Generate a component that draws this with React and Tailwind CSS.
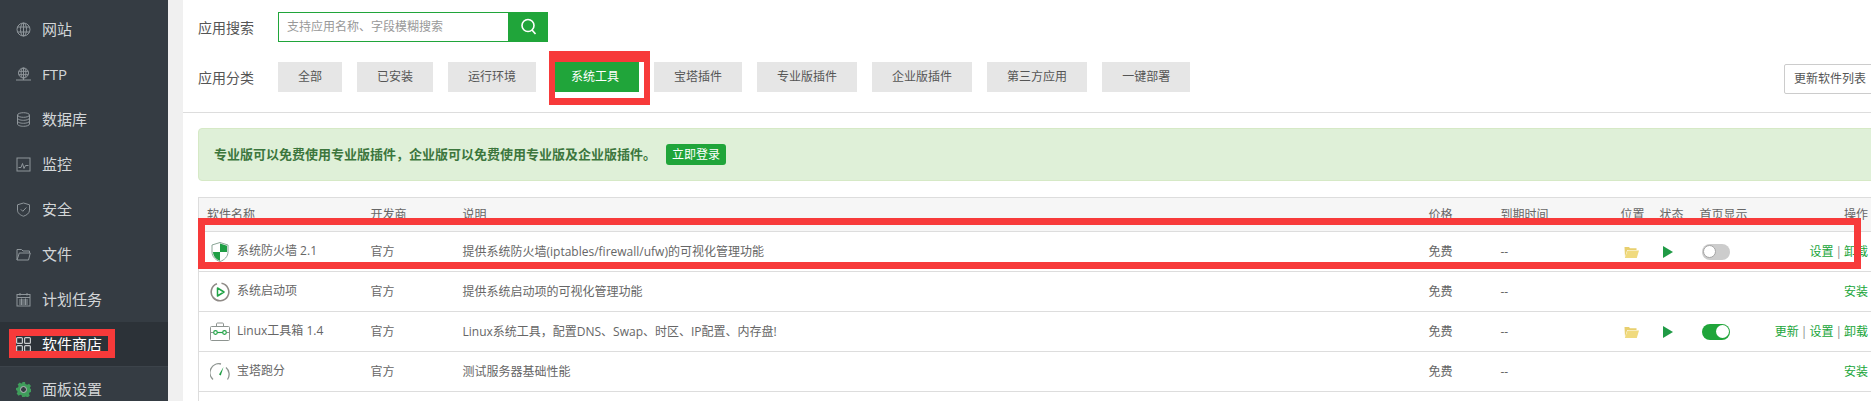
import React from "react";

const FONT = '"Open Sans","Noto Sans CJK SC","Noto Sans",sans-serif';

const S = ({ children, size = 15 }) => (
  <svg width={size} height={size} viewBox="0 0 15 15" fill="none" stroke="#8f969b" strokeWidth="1" className="shrink-0">
    {children}
  </svg>
);

const IGlobe = () => (
  <S>
    <circle cx="7.5" cy="7.5" r="6.5" />
    <ellipse cx="7.5" cy="7.5" rx="3" ry="6.5" />
    <path d="M1.5 5h12M1.5 10h12M7.5 1v13" />
  </S>
);
const IFtp = () => (
  <S>
    <circle cx="7.5" cy="6" r="5" />
    <ellipse cx="7.5" cy="6" rx="2.4" ry="5" />
    <path d="M2.8 4.3h9.4M2.8 7.7h9.4M7.5 1v10M0 13h15M7.5 11v2" />
  </S>
);
const IDb = () => (
  <S>
    <ellipse cx="7.5" cy="3" rx="6" ry="2.3" />
    <path d="M1.5 3v9c0 1.3 2.7 2.3 6 2.3s6-1 6-2.3V3M1.5 6c0 1.3 2.7 2.3 6 2.3s6-1 6-2.3M1.5 9c0 1.3 2.7 2.3 6 2.3s6-1 6-2.3" />
  </S>
);
const IMon = () => (
  <S>
    <rect x="1" y="1" width="13" height="13" />
    <path d="M2.5 10.5h2.5l1.5-4 1.5 5 1.5-3h3" />
  </S>
);
const IShield = () => (
  <S>
    <path d="M7.5 1l6 1.8v5.4c0 3-2.8 5-6 6-3.2-1-6-3-6-6V2.800z" />
    <path d="M4.800 7.300l2 2 3.500-3.800" />
  </S>
);
const IFolder = () => (
  <S>
    <path d="M1 13V2.500h4.500l1.500 1.500h6.500v2M1 13l2.300-7h11L12.500 13z" />
  </S>
);
const ICal = () => (
  <S>
    <rect x="1" y="2.500" width="13" height="11.500" />
    <path d="M1 5.500h13M4 1v2.500M11 1v2.500M3 8h9M3 10h9M3 12h9M5.500 6.500v6.500M9.500 6.500v6.500" />
  </S>
);
const IGrid = () => (
  <svg width="15" height="15" viewBox="0 0 15 15" fill="none" stroke="#c9cccf" strokeWidth="1.200" className="shrink-0">
    <rect x="0.600" y="0.600" width="5.800" height="5.800" rx="1" />
    <rect x="8.600" y="0.600" width="5.800" height="5.800" rx="1" />
    <rect x="0.600" y="8.600" width="5.800" height="5.800" rx="1" />
    <rect x="8.600" y="8.600" width="5.800" height="5.800" rx="1" />
  </svg>
);
const IGear = () => (
  <svg width="15" height="15" viewBox="0 0 15 15" className="shrink-0">
    <path
      fill="#3f9d5b"
      d="M6 0h3l.4 2 1.900.8L13 1.700l2 2.300-1.100 1.600.6 1.400H15v3l-1.500.4-.6 1.400.9 1.700-2.200 2-1.700-1-1.400.5L8.900 15H6.100l-.4-1.700-1.500-.6-1.600 1L.600 11.600l1-1.600-.6-1.500L0 8.200V6l1.900-.4.700-1.500-1-1.600 2.100-2 1.600 1 1.400-.6z"
    />
    <circle cx="7.500" cy="7.500" r="3" fill="#353c43" stroke="#b9bdc0" strokeWidth="1" />
  </svg>
);

const nav = [
  ["网站", IGlobe],
  ["FTP", IFtp],
  ["数据库", IDb],
  ["监控", IMon],
  ["安全", IShield],
  ["文件", IFolder],
  ["计划任务", ICal],
  ["软件商店", IGrid, true],
  ["面板设置", IGear],
];

const cats = [
  ["全部"],
  ["已安装"],
  ["运行环境"],
  ["系统工具", true],
  ["宝塔插件"],
  ["专业版插件"],
  ["企业版插件"],
  ["第三方应用"],
  ["一键部署"],
];

const AShield = () => (
  <svg width="20" height="20" viewBox="0 0 20 20">
    <path d="M10 0.500l8 2.500v7c0 4.500-3.500 8-8 9.500-4.500-1.500-8-5-8-9.500V3z" fill="#fff" stroke="#8aa596" strokeWidth="1" />
    <path d="M10 1.500l7 2.200V10h-7zM10 10v8.800c-3.800-1.300-7-4.500-7-8.800z" fill="#1f9e45" />
  </svg>
);
const APlay = () => (
  <svg width="20" height="20" viewBox="0 0 20 20" fill="none">
    <path d="M11.500 1.300A8.800 8.800 0 1 1 7 1.700" stroke="#8f8a86" strokeWidth="1.600" />
    <path d="M7.500 6l6.500 4-6.500 4z" stroke="#22a447" strokeWidth="1.500" strokeLinejoin="round" />
  </svg>
);
const ABox = () => (
  <svg width="20" height="20" viewBox="0 0 20 20" fill="none">
    <rect x="0.500" y="4.500" width="19" height="14" rx="1" stroke="#8d9490" />
    <path d="M6.500 4.500V2c0-.5.300-1 1-1h5c.7 0 1 .5 1 1v2.500M0.500 10.500h3M8 10.500h4M16.500 10.500h3" stroke="#8d9490" />
    <circle cx="5.500" cy="10.500" r="1.800" stroke="#22a447" strokeWidth="1.200" />
    <circle cx="14.500" cy="10.500" r="1.800" stroke="#22a447" strokeWidth="1.200" />
    <path d="M7.300 10.500h5.400" stroke="#22a447" strokeWidth="1.200" />
  </svg>
);
const AGauge = () => (
  <svg width="20" height="20" viewBox="0 0 20 20" fill="none">
    <path d="M3 17.500A9 9 0 0 1 11 2M16 5.500A9 9 0 0 1 17.500 17.500" stroke="#8d9490" strokeWidth="1.300" />
    <path d="M13.500 5l-4.500 7.500 1.800 1z" fill="#1f9e45" />
  </svg>
);
const ABlue = () => (
  <svg width="20" height="20" viewBox="0 0 20 20">
    <rect x="6" y="1" width="9" height="16" rx="2" fill="#2d8fd5" />
  </svg>
);

const FolderY = () => (
  <svg width="15" height="12" viewBox="0 0 15 12" className="mx-auto block">
    <path d="M0.500 1h4.500l1 1.300h6.500v1.700H3.200L1 11z" fill="#e8cf6e" />
    <path d="M3.500 4.500H15L12.800 12H0.800z" fill="#f0da7e" />
  </svg>
);
const PlayG = () => (
  <svg width="10" height="12" viewBox="0 0 10 12" className="block">
    <path d="M0 0l10 6-10 6z" fill="#1f9a45" />
  </svg>
);
const Toggle = ({ on }) =>
  on ? (
    <div className="flex h-[16px] w-[28px] items-center justify-end rounded-full bg-[#20a53a] pr-[1px]">
      <div className="h-[13px] w-[13px] rounded-full bg-white" />
    </div>
  ) : (
    <div className="flex h-[16px] w-[28px] items-center rounded-full bg-[#cccccc] pl-[1px]">
      <div className="h-[13px] w-[13px] rounded-full border border-[#a5a5a5] bg-white" />
    </div>
  );

const Sep = () => <span className="mx-[2px] text-[#888]">|</span>;
const L = ({ children }) => <span className="text-[#20a53a]">{children}</span>;

const rows = [
  {
    Icon: AShield,
    name: "系统防火墙 2.1",
    desc: "提供系统防火墙(iptables/firewall/ufw)的可视化管理功能",
    installed: true,
    on: false,
    ops: ["设置", "卸载"],
  },
  { Icon: APlay, name: "系统启动项", desc: "提供系统启动项的可视化管理功能", ops: ["安装"] },
  {
    Icon: ABox,
    name: "Linux工具箱 1.4",
    desc: "Linux系统工具，配置DNS、Swap、时区、IP配置、内存盘!",
    installed: true,
    on: true,
    ops: ["更新", "设置", "卸载"],
  },
  { Icon: AGauge, name: "宝塔跑分", desc: "测试服务器基础性能", ops: ["安装"] },
];

const heads = [
  ["软件名称", "w-[163px] pl-[8px] text-left"],
  ["开发商", "w-[92px] pl-[9px] text-left"],
  ["说明", "w-[966px] pl-[9px] text-left"],
  ["价格", "w-[72px] pl-[9px] text-left"],
  ["到期时间", "w-[120px] pl-[9px] text-left"],
  ["位置", "w-[39px] pl-[9px] text-left"],
  ["状态", "w-[40px] pl-[9px] text-left"],
  ["首页显示", "w-[70px] pl-[9px] text-left"],
  ["操作", "pr-[3px] text-right"],
];

export default function App() {
  return (
    <div
      className="relative flex h-[401px] w-[1871px] overflow-hidden bg-[#f0f0f0] text-[12px] text-[#666]"
      style={{ fontFamily: FONT }}
    >
      <aside className="w-[168px] shrink-0 bg-[#353c43] pt-[7px]">
        {nav.map(([label, Icon, active]) => (
          <div
            key={label}
            className={
              active
                ? "flex h-[45px] items-center gap-[11px] border-b border-[#3c434a] bg-[#2c3238] pl-[16px] text-[15px] text-white"
                : "flex h-[45px] items-center gap-[11px] pl-[16px] text-[15px] text-[#d3d6d8]"
            }
          >
            <Icon />
            <span>{label}</span>
          </div>
        ))}
      </aside>

      <main className="ml-[15px] min-w-0 flex-1 overflow-hidden bg-white">
        <section className="h-[113px] border-b border-[#dddddd] pl-[15px] pt-[12px]">
          <div className="flex h-[30px] items-center">
            <span className="w-[80px] text-[14px] text-[#555]">应用搜索</span>
            <div className="flex h-[30px] w-[231px] items-center border border-[#20a53a] pl-[8px] text-[#999]">
              支持应用名称、字段模糊搜索
            </div>
            <div className="flex h-[30px] w-[39px] items-center justify-center bg-[#20a53a]">
              <svg width="18" height="18" viewBox="0 0 18 18" fill="none" stroke="#fff" strokeWidth="1.600">
                <circle cx="8" cy="7.500" r="6" />
                <path d="M12 12l3.500 4" />
              </svg>
            </div>
          </div>
          <div className="mt-[20px] flex h-[30px] items-center">
            <span className="w-[80px] text-[14px] text-[#555]">应用分类</span>
            <div className="flex gap-[15px]">
              {cats.map(([c, active]) => (
                <div
                  key={c}
                  className={
                    active
                      ? "flex h-[30px] items-center bg-[#20a53a] px-[20px] text-white"
                      : "flex h-[30px] items-center bg-[#e6e6e6] px-[20px] text-[#555]"
                  }
                >
                  {c}
                </div>
              ))}
            </div>
            <div className="ml-auto mr-[-20px] mt-[4px] flex h-[30px] items-center rounded-[2px] border border-[#cccccc] bg-white pl-[9px] pr-[24px] text-[#555]">
              更新软件列表
            </div>
          </div>
        </section>

        <div className="ml-[15px] mr-[-10px] mt-[15px] flex h-[53px] items-center rounded-[4px] border border-[#d6e9c6] bg-[#dff0d8] pl-[15px]">
          <span className="text-[13px] font-bold text-[#3c763d]">
            专业版可以免费使用专业版插件，企业版可以免费使用专业版及企业版插件。
          </span>
          <span className="ml-[10px] flex h-[21px] w-[60px] items-center justify-center rounded-[3px] bg-[#20a53a] text-white">
            立即登录
          </span>
        </div>

        <table className="ml-[15px] mt-[16px] w-[1673px] table-fixed border-collapse border-l border-t border-[#dddddd]">
          <thead>
            <tr className="h-[34px] bg-[#f6f6f6]">
              {heads.map(([h, cls]) => (
                <th key={h} className={`${cls} border-b border-[#dddddd] font-normal`}>
                  {h}
                </th>
              ))}
            </tr>
          </thead>
          <tbody>
            {rows.map((r) => (
              <tr key={r.name} className="h-[40px] border-b border-[#dddddd]">
                <td className="pl-[11px]">
                  <div className="flex items-center gap-[7px]">
                    <r.Icon />
                    <span className="pb-[2px]">{r.name}</span>
                  </div>
                </td>
                <td className="pl-[9px]">官方</td>
                <td className="pl-[9px]">{r.desc}</td>
                <td className="pl-[9px]">免费</td>
                <td className="pl-[9px]">--</td>
                <td>{r.installed && <FolderY />}</td>
                <td className="pl-[12px]">{r.installed && <PlayG />}</td>
                <td className="pl-[11px]">{r.installed && <Toggle on={r.on} />}</td>
                <td className="whitespace-nowrap pr-[3px] text-right">
                  {r.ops.map((o, i) => (
                    <React.Fragment key={o}>
                      {i > 0 && <Sep />}
                      <L>{o}</L>
                    </React.Fragment>
                  ))}
                </td>
              </tr>
            ))}
            <tr className="h-[40px]">
              <td className="pl-[11px]" colSpan={9}>
                <ABlue />
              </td>
            </tr>
          </tbody>
        </table>
      </main>

      {/* hand-drawn red annotation boxes lying over the screenshot */}
      <div className="pointer-events-none absolute left-[9px] top-[329px] h-[29px] w-[106px] border-[7px] border-[#f73a3a]" />
      <div className="pointer-events-none absolute left-[549px] top-[51px] h-[54px] w-[101px] border-x-[6px] border-b-[7px] border-t-[11px] border-[#f73a3a]" />
      <div className="pointer-events-none absolute left-[198px] top-[218px] h-[51px] w-[1663px] border-[7px] border-[#f73a3a]" />
    </div>
  );
}
